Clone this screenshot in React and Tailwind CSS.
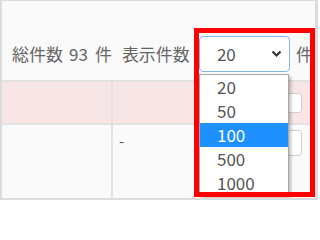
import React from 'react';

const font = { fontFamily: '"Noto Sans CJK JP", "Noto Sans", sans-serif' };

function Chevron() {
    return (
        <svg width="11" height="8" viewBox="0 0 11 8" className="text-[#333]">
            <polyline points="1.5,1.5 5.5,5.5 9.5,1.5" fill="none" stroke="currentColor" strokeWidth="2.2" />
        </svg>
    );
}

function PageSizeList({ options, active }) {
    return (
        <ul className="absolute left-[197px] top-[73px] w-[90px] bg-white border border-[#a7a7a7] shadow-[2px_2px_3px_rgba(0,0,0,0.25)]">
            {options.map((n) => (
                <li
                    key={n}
                    className={
                        n === active
                            ? 'h-[24px] pl-[17px] flex items-center bg-[#1e90ff] text-white text-[17px]'
                            : 'h-[24px] pl-[17px] flex items-center text-[#555] text-[17px]'
                    }
                >
                    {n}
                </li>
            ))}
        </ul>
    );
}

export default function App() {
    return (
        <div
            className="relative w-[318px] h-[200px] overflow-hidden bg-[#fafafa] border-t border-l-2 border-r-[3px] border-b-2 border-[#dcdcdc] flex flex-col"
            style={font}
        >
            {/* toolbar */}
            <div className="h-[79px] pt-[35px] pl-[10px] flex items-start">
                <div className="h-[36px] flex items-center text-[17px] text-[#666]">
                    <span>総件数</span>
                    <span className="ml-[6px]">93</span>
                    <span className="ml-[7px]">件</span>
                    <span className="ml-[10px]">表示件数</span>
                    <div className="ml-[9px] w-[91px] h-[36px] bg-white border border-[#7fb7ec] rounded-[4px] flex items-center justify-between pl-[17px] pr-[7px] text-[#555]">
                        <span>20</span>
                        <Chevron />
                    </div>
                    <span className="ml-[6px]">件</span>
                </div>
            </div>

            {/* table */}
            <div className="flex-1 flex flex-col border-t-2 border-[#e2e2e2]">
                <div className="h-[41px] grid grid-cols-[111px_1fr] bg-[#f8e6e7]">
                    <div className="border-r-2 border-[#e2e2e2]" />
                    <div className="flex items-center justify-end pr-[13px]">
                        <div className="w-[30px] h-[20px] bg-white border border-[#cfcfcf] rounded-[3px]" />
                    </div>
                </div>
                <div className="flex-1 grid grid-cols-[111px_1fr] border-t-2 border-[#e2e2e2]">
                    <div className="border-r-2 border-[#e2e2e2]" />
                    <div className="flex items-start justify-between pl-[6px] pr-[13px] pt-[5px] text-[15px] text-[#555]">
                        <span>-</span>
                        <div className="w-[30px] h-[26px] bg-white border border-[#cfcfcf] rounded-[3px]" />
                    </div>
                </div>
            </div>

            <PageSizeList options={[20, 50, 100, 500, 1000]} active={100} />

            {/* highlight box */}
            <div className="absolute left-[192px] top-[27px] w-[121px] h-[169px] border-[5px] border-[#ff0000]" />
        </div>
    );
}
